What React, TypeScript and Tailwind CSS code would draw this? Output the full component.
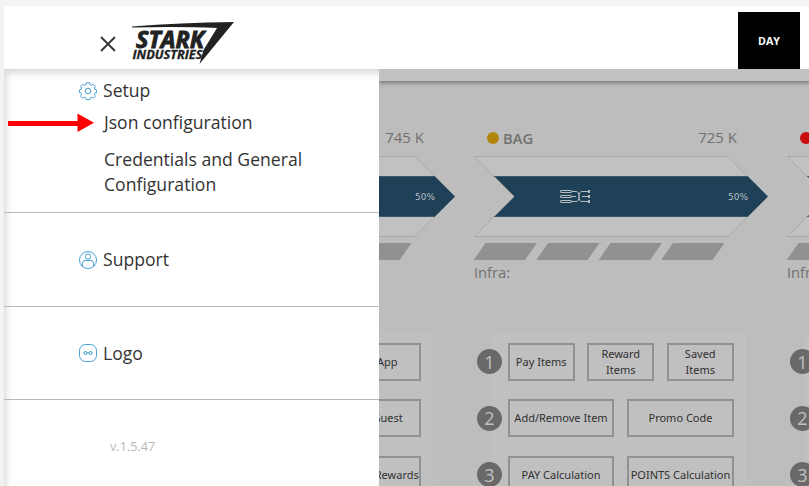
import type { ReactNode } from "react";

const Logo = () => (
  <svg width="104" height="46" viewBox="132 20 104 46">
    <path d="M132 26.500 Q180 22.500 234 22 L199.500 64 L203.500 50 L217 28 Q180 26.500 132 27.500 Z" fill="#222" />
    <g fill="#222" stroke="#222" fontFamily="'Open Sans', 'Liberation Sans', sans-serif" fontWeight="700" fontStyle="italic">
      <text x="136" y="48" fontSize="23" strokeWidth="0.9" textLength="68" lengthAdjust="spacingAndGlyphs">STARK</text>
      <text x="132.500" y="58.500" fontSize="11.500" strokeWidth="0.3" textLength="70" lengthAdjust="spacingAndGlyphs">INDUSTRIES</text>
    </g>
  </svg>
);

const GearIcon = () => (
  <svg className="shrink-0" width="18" height="18" viewBox="0 0 18 18" fill="none" stroke="#46a0d4" strokeWidth="1">
    <path d="M7.200 .8h3.600l.5 2 1.100.5 1.900-1 2 2-1 1.800.5 1.200 1.900.5v2.800l-1.900.5-.5 1.200 1 1.900-2 2-1.900-1-1.100.5-.5 1.800H7.200l-.5-1.800-1.200-.5-1.900 1-2-2 1-1.900-.4-1.200-1.800-.5V7.800l1.800-.5.4-1.200-1-1.800 2-2 1.900 1 1.200-.5Z" />
    <circle cx="9" cy="9" r="2.800" />
  </svg>
);

const PersonIcon = () => (
  <svg className="shrink-0" width="18" height="18" viewBox="0 0 18 18" fill="none" stroke="#46a0d4" strokeWidth="1">
    <circle cx="9" cy="9" r="8.500" />
    <circle cx="9" cy="5.500" r="2.700" />
    <path d="M3.500 15.200v-3q0-2.700 2.700-2.700h5.600q2.700 0 2.700 2.700v3" />
  </svg>
);

const DotsIcon = () => (
  <svg className="shrink-0" width="18" height="18" viewBox="0 0 18 18" fill="none" stroke="#46a0d4" strokeWidth="1">
    <rect x=".5" y=".5" width="17" height="17" rx="6" />
    <circle cx="6.500" cy="9" r="1.600" />
    <circle cx="11.500" cy="9" r="1.600" />
    <path d="M8 9h2" />
  </svg>
);

const MenuRow = ({ icon, label }: { icon: ReactNode; label: string }) => (
  <div className="flex h-[25px] items-center gap-[6px] pl-[75px]">
    {icon}
    <span>{label}</span>
  </div>
);

const Arrow = ({ percent }: { percent?: string }) => (
  <svg className="mt-[5px] block" width="294" height="82" viewBox="0 0 294 82">
    <path d="M.5 .5H254L293.500 40.500L254 80.500H.5L40 40.500Z" fill="#c1c1c1" stroke="#a9a9a9" />
    <path d="M20 20H273.500L294 40.500L273.500 61H20L40.500 40.500Z" fill="#1e4157" />
    <path d="M20.500 20.500H273.500M20.500 60.500H273.500" stroke="#395a6d" />
    <g fill="none" stroke="#b5bcc0" strokeWidth="1">
      <rect x="86.500" y="34.500" width="11" height="2" rx=".5" />
      <rect x="86.500" y="39.500" width="11" height="2" rx=".5" />
      <rect x="86.500" y="44.500" width="11" height="2" rx=".5" />
      <path d="M98 35.500h4q3 0 3 5t3 5h6M98 40.500h4M108 40.500h6M98 45.500h4q3 0 3-5t3-5h6" />
    </g>
    <path d="M114 34h2v3h-2zM114 39h2v3h-2zM114 44h2v3h-2z" fill="#b5bcc0" />
    {percent && (
      <text x="254" y="44" fontSize="9.300" fill="#b9bfc3" fontFamily="'DejaVu Sans', sans-serif" textLength="20" lengthAdjust="spacingAndGlyphs">
        {percent}
      </text>
    )}
  </svg>
);

const Bars = () => (
  <svg className="mt-[5px] block" width="294" height="17" viewBox="0 0 294 17">
    {[0, 62.5, 125, 187.5].map((x) => (
      <path key={x} d={`M${x} 16.500L${x + 11.5} 0H${x + 63}L${x + 51} 17H${x}Z`} fill="#919191" />
    ))}
  </svg>
);

type Item = { text: string; style?: string };

const bagRows: Item[][] = [
  [{ text: "Pay Items" }, { text: "Reward Items", style: "w-[45px]" }, { text: "Saved Items", style: "w-[45px]" }],
  [{ text: "Add/Remove Item" }, { text: "Promo Code" }],
  [{ text: "PAY Calculation" }, { text: "POINTS Calculation" }],
];
const leadingRows: Item[][] = [
  [{ text: "" }, { text: "" }, { text: "App" }],
  [{ text: "" }, { text: "Guest", style: "ml-auto mr-[16px]" }],
  [{ text: "" }, { text: "Rewards", style: "ml-auto" }],
];
const trailingRows: Item[][] = [[{ text: "" }], [{ text: "" }], [{ text: "" }]];

type ColumnProps = {
  name?: string;
  value?: string;
  percent?: string;
  dot: string;
  items: Item[][];
  labelled?: boolean;
};

const Column = ({ name, value, percent, dot, items, labelled = true }: ColumnProps) => (
  <section className="w-[294px] shrink-0">
    <div className="flex h-[25px] items-center pr-[31px] pb-[2px] pl-[13px] text-[15px] text-[#707070]">
      <span className={`mr-[4px] size-[12px] rounded-full ${dot}`} />
      <span className="pt-[2px] text-[14.700px] font-semibold">{name}</span>
      <span className="ml-auto">{value}</span>
    </div>
    <Arrow percent={percent} />
    <Bars />
    <div className="mt-[2px] h-[20px] text-[14.700px] leading-[20px] text-[#707070]">{labelled && "Infra:"}</div>
    <div className="mt-[52px] mr-[22px] ml-[17px] flex h-[170px] flex-col gap-[18px] bg-[#c0c0c0] pt-[8.500px]">
      {items.map((row, i) => (
        <div key={i} className="-ml-[14px] flex h-[38.500px] w-[256.750px] items-center">
          <span className="mr-[5.750px] flex size-[25px] shrink-0 items-center justify-center rounded-full bg-[#696969] pt-[1px] text-[18px] text-[#c0c0c0]">
            {labelled && i + 1}
          </span>
          <div className={`flex h-[38px] min-w-0 flex-1 ${row.length === 3 ? "gap-[12.500px]" : "gap-[13px]"}`}>
            {row.map((item, j) => (
              <div
                key={j}
                className="flex min-w-0 flex-1 basis-0 items-center justify-center border-2 border-[#919191] text-center font-['Noto_Sans',sans-serif] text-[11px] leading-[16px] text-[#303030]"
              >
                <span className={item.style ?? "whitespace-nowrap"}>{item.text}</span>
              </div>
            ))}
          </div>
        </div>
      ))}
    </div>
  </section>
);

export default function App() {
  return (
    <div className="flex h-[486px] w-[809px] flex-col overflow-hidden bg-[#f2f4f4] pt-[6px] pl-[4px] font-['Open_Sans',sans-serif]">
      <header className="flex h-[63px] shrink-0 items-start bg-white">
        <svg className="mt-[30px] ml-[96px]" width="16" height="16" viewBox="0 0 16 16">
          <path d="M1 1L15 15M15 1L1 15" stroke="#333" strokeWidth="1.800" />
        </svg>
        <div className="mt-[14px] ml-[16px]"><Logo /></div>
        <div className="mt-[6px] mr-[9px] ml-auto flex h-[57px] w-[62px] items-center justify-center bg-black pt-[2px] text-[10.700px] font-bold text-white">
          DAY
        </div>
      </header>
      <div className="flex h-[417px] min-h-0">
        <nav className="w-[375px] shrink-0 bg-white text-[17.600px] leading-[25px] text-[#333] shadow-[inset_4px_6px_7px_-2px_#d8d8d8]">
          <div className="relative h-[144px] border-b border-[#b8b8b8] pt-[9px]">
            <MenuRow icon={<GearIcon />} label="Setup" />
            <div className="mt-[7px] pl-[100px]">Json configuration</div>
            <div className="mt-[12px] w-[320px] pl-[100px]">Credentials and General Configuration</div>
            <svg className="absolute top-[44px] left-[4px]" width="87" height="20" viewBox="0 0 87 20">
              <path d="M0 8H69.500V.5L86 9.800L69.500 19V13H0Z" fill="#f00" />
            </svg>
          </div>
          <div className="flex h-[94px] flex-col justify-center border-b border-[#b8b8b8]">
            <MenuRow icon={<PersonIcon />} label="Support" />
          </div>
          <div className="flex h-[93px] flex-col justify-center border-b border-[#b8b8b8]">
            <MenuRow icon={<DotsIcon />} label="Logo" />
          </div>
          <div className="pt-[34px] pl-[106px] text-[12.700px] text-[#b8b8b8]">v.1.5.47</div>
        </nav>
        <main className="min-w-0 flex-1 overflow-hidden bg-[#bdbdbd]">
          <div className="h-[12px] bg-[#c1c1c1] shadow-[0_1px_4px_1px_#777]" />
          <div className="-ml-[218px] flex gap-[19px] pt-[45px]">
            <Column value="745 K" percent="50%" dot="bg-[#b0860c]" items={leadingRows} labelled={false} />
            <Column name="BAG" value="725 K" percent="50%" dot="bg-[#b0860c]" items={bagRows} />
            <Column dot="bg-[#c80d0d]" items={trailingRows} />
          </div>
        </main>
      </div>
    </div>
  );
}
